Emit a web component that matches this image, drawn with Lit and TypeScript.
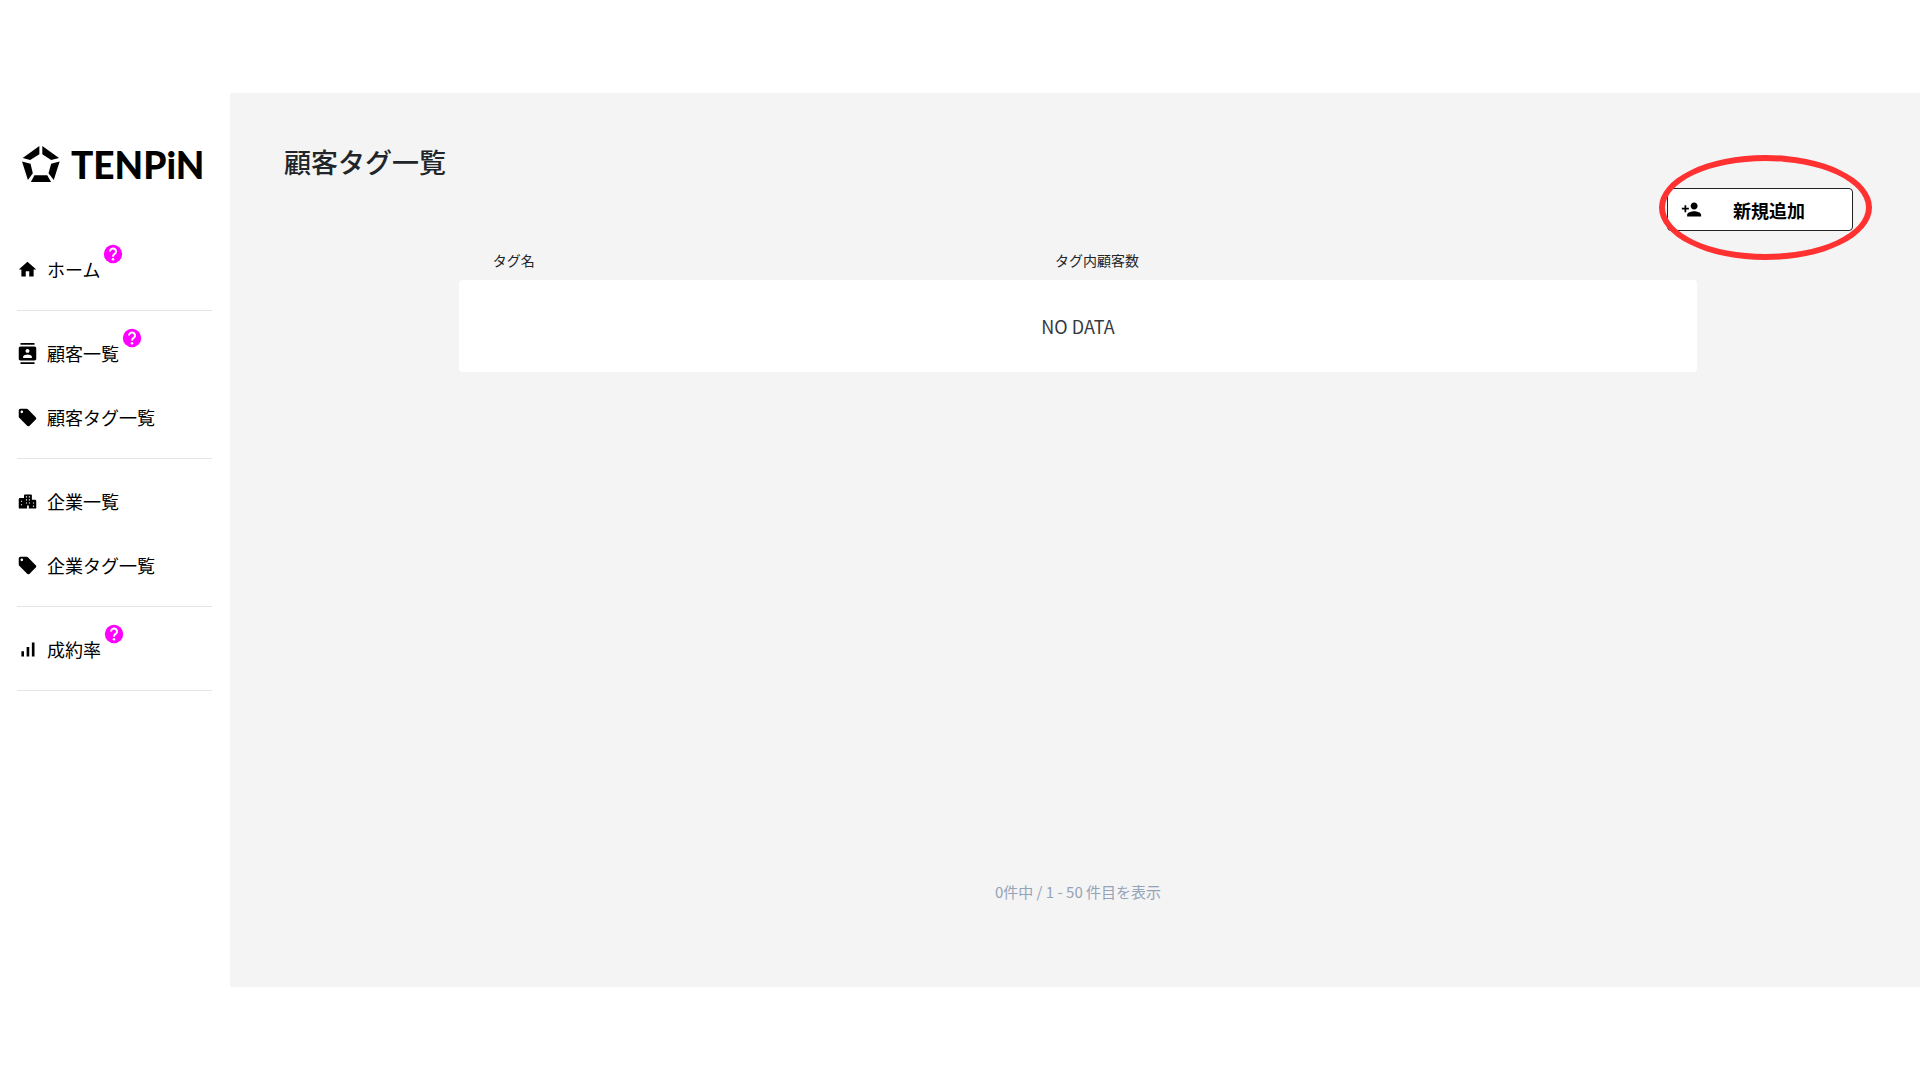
import { LitElement, html, css, svg, nothing } from "lit";
import { customElement, property } from "lit/decorators.js";

type Item = { icon: string; label: string; help?: boolean };

const icons: Record<string, unknown> = {
  home: svg`<path d="M10 20v-6h4v6h5v-8h3L12 3 2 12h3v8z"/>`,
  contacts: svg`<path d="M20 0H4v2h16V0zM4 24h16v-2H4v2zM20 4H4c-1.1 0-2 .9-2 2v12c0 1.1.9 2 2 2h16c1.1 0 2-.9 2-2V6c0-1.1-.9-2-2-2zm-8 2.75c1.24 0 2.25 1.01 2.25 2.25s-1.01 2.25-2.25 2.25S9.75 10.24 9.75 9 10.76 6.75 12 6.75zM17 17H7v-1.5c0-1.67 3.33-2.5 5-2.5s5 .83 5 2.5V17z"/>`,
  tag: svg`<path d="M21.41 11.58l-9-9C12.05 2.22 11.55 2 11 2H4c-1.1 0-2 .9-2 2v7c0 .55.22 1.05.59 1.42l9 9c.36.36.86.58 1.41.58.55 0 1.05-.22 1.41-.59l7-7c.37-.36.59-.86.59-1.41 0-.55-.23-1.06-.59-1.42zM5.5 7C4.67 7 4 6.33 4 5.5S4.67 4 5.5 4 7 4.67 7 5.5 6.33 7 5.5 7z"/>`,
  city: svg`<path fill-rule="evenodd" d="M9 4h7a1 1 0 0 1 1 1v5h3.500a1.500 1.500 0 0 1 1.500 1.500V19a1 1 0 0 1-1 1h-7.500v-3.500h-2V20H3a1 1 0 0 1-1-1V9.500A1.500 1.500 0 0 1 3.500 8H8V5a1 1 0 0 1 1-1zM10.200 6v1.400h1.300V6zM13.500 6v1.400h1.300V6zM10.200 9.500v1.400h1.300V9.500zM13.500 9.500v1.400h1.300V9.500zM10.200 13v1.400h1.300V13zM13.500 13v1.400h1.300V13zM4.500 11v1.400h1.300V11zM4.500 15v1.400h1.300V15zM18.200 13v1.400h1.300V13zM18.200 16.500v1.400h1.300v-1.400z"/>`,
  chart: svg`<path d="M17 4h3v16h-3zM5 14h3v6H5zm6-5h3v11h-3z"/>`,
  help: svg`<circle cx="12" cy="12" r="10"/><path d="M8.700 9.200a3.300 3.100 0 1 1 5.600 2.200C13 12.500 12 13 12 15" fill="none" stroke="#fff" stroke-width="2.200"/><circle cx="12" cy="17.700" r="1.400" fill="#fff"/>`,
  personAdd: svg`<path d="M15 12c2.210 0 4-1.790 4-4s-1.790-4-4-4-4 1.790-4 4 1.790 4 4 4zm-9-2V7H4v3H1v2h3v3h2v-3h3v-2H6zm9 4c-2.670 0-8 1.340-8 4v2h16v-2c0-2.660-5.330-4-8-4z"/>`,
};

const groups: Item[][] = [
  [{ icon: "home", label: "ホーム", help: true }],
  [
    { icon: "contacts", label: "顧客一覧", help: true },
    { icon: "tag", label: "顧客タグ一覧" },
  ],
  [
    { icon: "city", label: "企業一覧" },
    { icon: "tag", label: "企業タグ一覧" },
  ],
  [{ icon: "chart", label: "成約率", help: true }],
];

@customElement("tp-icon")
class TpIcon extends LitElement {
  @property() name = "home";
  static styles = css`
    :host { display: block; flex: none; width: 21px; height: 21px; }
    svg { display: block; width: 100%; height: 100%; fill: currentColor; }
  `;
  render() {
    return html`<svg viewBox="0 0 24 24" aria-hidden="true">${icons[this.name]}</svg>`;
  }
}

@customElement("tp-sidebar")
class TpSidebar extends LitElement {
  static styles = css`
    :host { display: block; padding: 50px 18px 0 17px; box-sizing: border-box; }
    .logo { display: flex; align-items: center; gap: 11px; padding-left: 5px; height: 42px; color: #000; text-decoration: none; }
    .mark { flex: none; width: 38px; height: 36px; }
    .name { padding-top: 2px; font: 900 37px/42px Lato, "Liberation Sans", sans-serif; }
    nav { padding-top: 52px; }
    ul { list-style: none; margin: 0; padding: 0 0 9px; border-bottom: 1px solid #e4e4e4; }
    ul + ul { padding-top: 10px; }
    .link { display: flex; align-items: center; height: 64px; color: #000; text-decoration: none; font-size: 18px; line-height: 26px; }
    .label { padding-left: 9px; }
    .help { align-self: flex-start; width: 22px; height: 22px; margin: 6px 0 0 2px; color: #f0f; }
  `;
  render() {
    return html`
      <a class="logo" href="#">
        <svg class="mark" viewBox="66 196 116 110" aria-hidden="true">
          <path d="M119 196v25L91 239 68 233zM128 196v25L155 239 179 233zM66 243L92 250 99 279 84 300zM181 243L155 250 147 279 163 300zM104 285h39l12 21H93z"/>
        </svg>
        <span class="name">TENPiN</span>
      </a>
      <nav>
        ${groups.map((g) => html`<ul>${g.map((i) => html`
          <li><a class="link" href="#">
            <tp-icon name=${i.icon}></tp-icon>
            <span class="label">${i.label}</span>
            ${i.help ? html`<tp-icon class="help" name="help"></tp-icon>` : nothing}
          </a></li>`)}</ul>`)}
      </nav>`;
  }
}

@customElement("app-root")
class AppRoot extends LitElement {
  static styles = css`
    :host { display: block; min-height: 100vh; box-sizing: border-box; padding: 93px 0; background: #fff; font-family: "Noto Sans CJK JP", sans-serif; color: #212529; }
    .shell { display: grid; grid-template-columns: 230px 1fr; min-height: calc(100vh - 186px); }
    main { display: flex; flex-direction: column; background: #f4f4f4; padding: 49px 48px 0 54px; }
    h1 { margin: 0; font-size: 27px; font-weight: 500; line-height: 40px; }
    .actions { display: flex; justify-content: flex-end; padding: 6px 19px 0 0; }
    .callout { position: relative; }
    .add { display: flex; align-items: center; width: 186px; height: 43px; padding: 0 0 0 13px; border: 1px solid #222; border-radius: 4px; background: #fff; color: #000; font: 700 18px/26px "Noto Sans CJK JP", sans-serif; }
    .add span { flex: 1; padding-right: 16px; text-align: center; }
    .ring { position: absolute; left: -8px; top: -33px; width: 213px; height: 105px; box-sizing: border-box; border: 6px solid #ff3131; border-radius: 50%; pointer-events: none; }
    table { width: 78%; margin: 16px auto 0; border-collapse: separate; border-spacing: 0; table-layout: fixed; }
    th { padding: 0 0 7px 39px; font-size: 14px; font-weight: 400; line-height: 26px; text-align: left; }
    th:first-child { width: 45%; padding-left: 34px; box-sizing: border-box; }
    td { height: 92px; padding: 0; border-radius: 4px; background: #fff; color: #343a40; font-size: 18px; text-align: center; }
    .count { margin: auto 0 0; padding-bottom: 83px; color: #94a3b8; font-size: 15px; line-height: 24px; text-align: center; }
  `;
  render() {
    return html`
      <div class="shell">
        <tp-sidebar></tp-sidebar>
        <main>
          <h1>顧客タグ一覧</h1>
          <div class="actions">
            <div class="callout">
              <button class="add" type="button"><tp-icon name="personAdd"></tp-icon><span>新規追加</span></button>
              <div class="ring"></div>
            </div>
          </div>
          <table>
            <thead><tr><th scope="col">タグ名</th><th scope="col">タグ内顧客数</th></tr></thead>
            <tbody><tr><td colspan="2">NO DATA</td></tr></tbody>
          </table>
          <p class="count">0件中 / 1 - 50 件目を表示</p>
        </main>
      </div>`;
  }
}
